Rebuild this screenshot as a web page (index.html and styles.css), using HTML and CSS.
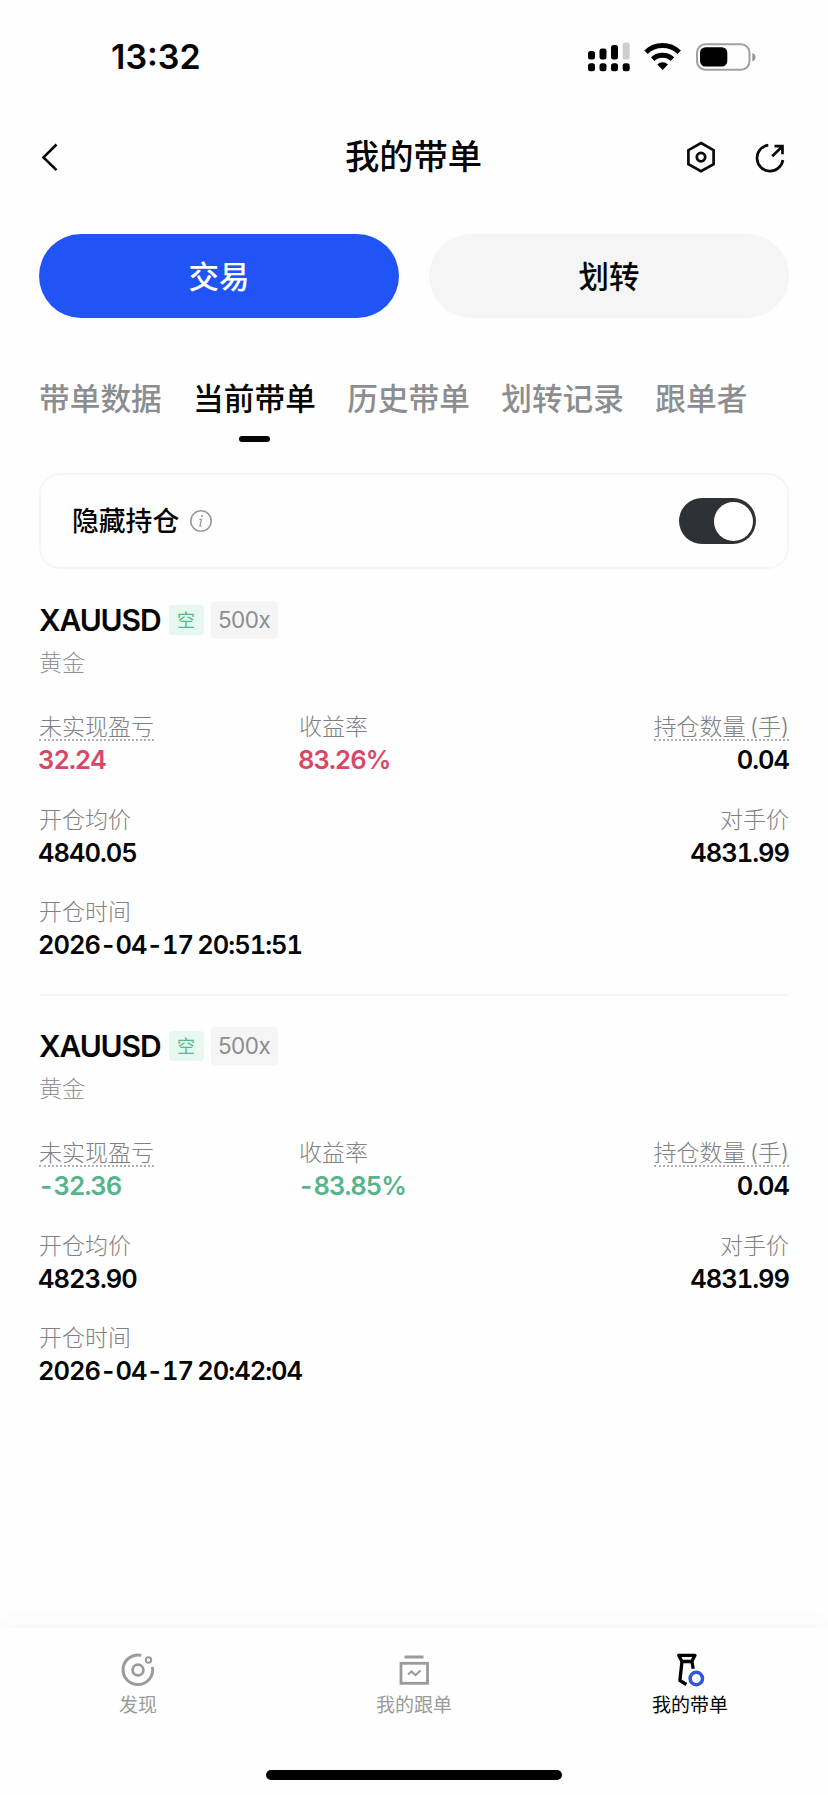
FILE: index.html
```html
<!DOCTYPE html>
<html lang="zh-CN">
<head>
<meta charset="utf-8">
<title>我的带单</title>
<link rel="stylesheet" href="styles.css">
</head>
<body>
<div class="screen">
  <div class="status">
    <span class="clock">13:32</span>
    <svg class="status-icons" width="170" height="32" viewBox="0 0 170 32">
      <g fill="#000">
        <rect x="0" y="10" width="7" height="8.5" rx="2.5"/><rect x="11.5" y="7.5" width="7" height="11" rx="2.5"/><rect x="23" y="4" width="7" height="14.500" rx="2.500"/>
        <rect x="0" y="22.300" width="7" height="8" rx="2.500"/><rect x="11.500" y="22.300" width="7" height="8" rx="2.500"/><rect x="23" y="22.300" width="7" height="8" rx="2.500"/><rect x="34.700" y="22.300" width="7" height="8" rx="2.500"/>
      </g>
      <rect x="34.700" y="1.500" width="7" height="17" rx="2.500" fill="#cdcdcd"/>
      <g fill="none" stroke="#000" stroke-width="5">
        <path d="M58 11.200a24 24 0 0 1 33.200 0"/><path d="M64.700 18.100a14.700 14.700 0 0 1 19.800 0"/>
      </g>
      <path d="M74.600 29l-5.400-5.600a8 8 0 0 1 10.800 0z" fill="#000"/>
      <rect x="109" y="3.300" width="52.500" height="25.500" rx="8.500" fill="none" stroke="#a0a0a0" stroke-width="2"/>
      <rect x="112" y="6.200" width="27.300" height="19.300" rx="5.500" fill="#000"/>
      <path d="M164.300 12v8.400c2-.6 3.300-2.200 3.300-4.200s-1.300-3.600-3.300-4.200z" fill="#989898"/>
    </svg>
  </div>

  <header class="header">
    <svg class="back" width="20" height="32" viewBox="0 0 20 32"><path d="M17.500 3.500L4.500 16.400l13 12.800" fill="none" stroke="#000" stroke-width="2.500"/></svg>
    <h1 class="title">我的带单</h1>
    <div class="actions">
      <svg width="32" height="34" viewBox="0 0 32 34" fill="none" stroke="#0a0a0a" stroke-width="2.700"><path d="M16 3l12.600 7.200v14L16 31.300 3.400 24.200v-14z"/><circle cx="16" cy="17.100" r="4.200" stroke-width="2.800"/></svg>
      <svg width="32" height="34" viewBox="0 0 32 34" fill="none" stroke="#0a0a0a" stroke-width="2.700"><path d="M14.300 5.200A13 13 0 1 0 28.900 20"/><path d="M20.500 6.200h8v8M28 6.700L18.200 16.300"/></svg>
    </div>
  </header>

  <div class="buttons">
    <div class="button primary">交易</div>
    <div class="button">划转</div>
  </div>

  <nav class="tabs">
    <span class="tab">带单数据</span><span class="tab active">当前带单</span><span class="tab">历史带单</span><span class="tab">划转记录</span><span class="tab">跟单者</span>
  </nav>

  <section class="hide-card">
    <span class="hide-label">隐藏持仓</span>
    <svg width="24" height="24" viewBox="0 0 24 24"><circle cx="12" cy="12" r="10.200" fill="none" stroke="#9a9a9a" stroke-width="1.600"/><path d="M10.300 10.300h2.200l-1.600 6.500h1.700" fill="none" stroke="#9a9a9a" stroke-width="1.300"/><circle cx="13" cy="7" r="1.100" fill="#9a9a9a"/></svg>
    <span class="toggle"><i class="knob"></i></span>
  </section>

  <main>
    <article class="position">
      <div class="symbol-row"><h2 class="symbol">XAUUSD</h2><span class="side">空</span><span class="leverage">500x</span></div>
      <p class="name">黄金</p>
      <div class="fields">
        <div><span class="label dotted">未实现盈亏</span><b class="value loss">32.24</b></div>
        <div><span class="label">收益率</span><b class="value loss">83.26%</b></div>
        <div class="right"><span class="label dotted">持仓数量 (手)</span><b class="value">0.04</b></div>
        <div class="wide"><span class="label">开仓均价</span><b class="value">4840.05</b></div>
        <div class="right"><span class="label">对手价</span><b class="value">4831.99</b></div>
        <div class="wide"><span class="label">开仓时间</span><b class="value">2026-04-17 20:51:51</b></div>
      </div>
    </article>
    <article class="position">
      <div class="symbol-row"><h2 class="symbol">XAUUSD</h2><span class="side">空</span><span class="leverage">500x</span></div>
      <p class="name">黄金</p>
      <div class="fields">
        <div><span class="label dotted">未实现盈亏</span><b class="value gain">-32.36</b></div>
        <div><span class="label">收益率</span><b class="value gain">-83.85%</b></div>
        <div class="right"><span class="label dotted">持仓数量 (手)</span><b class="value">0.04</b></div>
        <div class="wide"><span class="label">开仓均价</span><b class="value">4823.90</b></div>
        <div class="right"><span class="label">对手价</span><b class="value">4831.99</b></div>
        <div class="wide"><span class="label">开仓时间</span><b class="value">2026-04-17 20:42:04</b></div>
      </div>
    </article>
  </main>

  <footer class="bottom">
    <div class="nav">
      <div class="nav-item">
        <svg width="36" height="36" viewBox="0 0 36 36" fill="none" stroke="#9b9b9b"><path d="M21.300 3.400A14.800 14.800 0 1 0 32.400 15" stroke-width="3"/><circle cx="18" cy="18" r="5.400" stroke-width="2.800"/><circle cx="28.500" cy="8" r="2.700" stroke-width="2"/></svg>
        <span>发现</span>
      </div>
      <div class="nav-item">
        <svg width="36" height="36" viewBox="0 0 36 36" fill="none" stroke="#9b9b9b" stroke-width="2.800"><path d="M8.500 5h19" stroke-width="3"/><rect x="5" y="11.300" width="26.500" height="20"/><path d="M12 22.500l3.500-3 4 3.500 5-4.500" stroke-width="2.200"/></svg>
        <span>我的跟单</span>
      </div>
      <div class="nav-item current">
        <svg width="36" height="36" viewBox="0 0 36 36" fill="none" stroke="#000" stroke-width="3.300" stroke-linejoin="round"><path d="M6.700 3.300H23L19.700 9.500H10z"/><path d="M10 9.500L7.900 28.500l6.500 4M19.900 9.500l1.300 7.200"/><circle cx="24.300" cy="26.500" r="6.200" stroke="#2c56df" stroke-width="3.500"/></svg>
        <span>我的带单</span>
      </div>
    </div>
    <div class="home-indicator"></div>
  </footer>
</div>
</body>
</html>
```
FILE: styles.css
```css
* { box-sizing: border-box; }
body {
  margin: 0;
  background: #fefefe;
  color: #050505;
  font-family: Inter, "Noto Sans CJK SC", sans-serif;
}
h1, h2, p { margin: 0; }
svg { display: block; flex: none; }
.screen {
  width: 828px;
  height: 1795px;
  display: flex;
  flex-direction: column;
  overflow: hidden;
}
.status {
  height: 113px;
  padding: 0 70px 0 111px;
  display: flex;
  align-items: center;
  justify-content: space-between;
}
.clock { font-size: 34px; font-weight: 600; }
.header {
  height: 87px;
  padding: 0 40px 0 39px;
  display: grid;
  grid-template-columns: 1fr auto 1fr;
  align-items: center;
}
.title { font-size: 34.3px; line-height: 87px; font-weight: 500; }
.actions { display: flex; justify-content: flex-end; gap: 37px; margin-right: 2px; }
.buttons {
  height: 84px;
  margin: 34px 39px 0;
  display: grid;
  grid-template-columns: 1fr 1fr;
  grid-auto-rows: 84px;
  gap: 30px;
}
.button {
  border-radius: 42px;
  background: #f5f5f5;
  font-size: 30.5px;
  font-weight: 500;
  line-height: 86px;
  text-align: center;
}
.primary { background: #2154f6; color: #fff; }
.tabs {
  height: 88px;
  margin: 36px 39px 0;
  display: flex;
  gap: 31.3px;
}
.tab {
  position: relative;
  font-size: 30.7px;
  line-height: 90px;
  color: #8b8d90;
  font-weight: 500;
  white-space: nowrap;
}
.active { color: #050505; }
.active::after {
  content: "";
  position: absolute;
  left: 50%;
  bottom: 0;
  width: 31px;
  height: 6px;
  margin-left: -15px;
  border-radius: 3px;
  background: #050505;
}
.hide-card {
  height: 96px;
  margin: 31px 39px 0;
  padding: 0 31px;
  display: flex;
  align-items: center;
  gap: 10px;
  border: 2px solid #f6f6f6;
  border-radius: 21px;
}
.hide-label { font-size: 26.8px; font-weight: 500; line-height: 36px; padding-bottom: 1px; }
.toggle {
  width: 77px;
  height: 46px;
  margin-left: auto;
  padding: 3.500px;
  display: flex;
  justify-content: flex-end;
  border-radius: 23px;
  background: #2e3135;
}
.knob { width: 39px; height: 39px; border-radius: 50%; background: #fff; }
.position {
  height: 426px;
  margin: 0 39px;
  padding-top: 32px;
}
.position + .position { margin-top: -1px; border-top: 2px solid #f7f7f7; }
.position + .position .symbol-row { margin-top: -1px; }
.symbol-row { height: 38px; display: flex; align-items: center; }
.symbol { font-size: 30px; font-weight: 600; line-height: 38px; letter-spacing: -1.100px; }
.side {
  width: 35px;
  height: 30px;
  margin-left: 8px;
  border-radius: 4px;
  background: #e6f8f0;
  color: #55b98e;
  font-size: 18px;
  line-height: 31px;
  text-align: center;
}
.leverage {
  width: 67px;
  height: 38px;
  margin-left: 7px;
  border-radius: 4px;
  background: #f5f5f5;
  color: #8b8d90;
  font-size: 22.5px;
  line-height: 37px;
  letter-spacing: -.5px;
  text-align: center;
}
.name { margin-top: 7px; font-size: 23px; line-height: 34px; font-weight: 300; color: #929497; }
.fields {
  margin-top: 31px;
  display: grid;
  grid-template-columns: 260px 1fr auto;
  grid-auto-rows: 92.5px;
}
.fields > div { display: flex; flex-direction: column; align-items: flex-start; }
.fields > .right { align-items: flex-end; }
.wide { grid-column: 1 / 3; }
.label { height: 30px; font-size: 23px; line-height: 32px; font-weight: 300; color: #808184; white-space: nowrap; word-spacing: -2px; }
.dotted { border-bottom: 2px dotted #b0b0b2; }
.value {
  margin: 2px 0 0 -1px;
  font-size: 25.5px;
  line-height: 34px;
  font-weight: 600;
  font-variant-numeric: tabular-nums;
  letter-spacing: -1px;
  word-spacing: -1.500px;
}
.loss { color: #d64865; }
.gain { color: #54b58b; }
.bottom {
  margin-top: auto;
  height: 167px;
  display: flex;
  flex-direction: column;
  align-items: center;
  background: #fefefe;
  box-shadow: 0 -8px 16px #f9f9f9;
}
.nav { width: 100%; padding-top: 24px; display: grid; grid-template-columns: repeat(3, 1fr); }
.nav-item {
  display: flex;
  flex-direction: column;
  align-items: center;
  color: #9b9b9b;
  font-size: 19px;
  line-height: 36px;
}
.current { color: #050505; }
.home-indicator {
  width: 296px;
  height: 10px;
  margin: auto 0 15px;
  border-radius: 5px;
  background: #000;
}
```
